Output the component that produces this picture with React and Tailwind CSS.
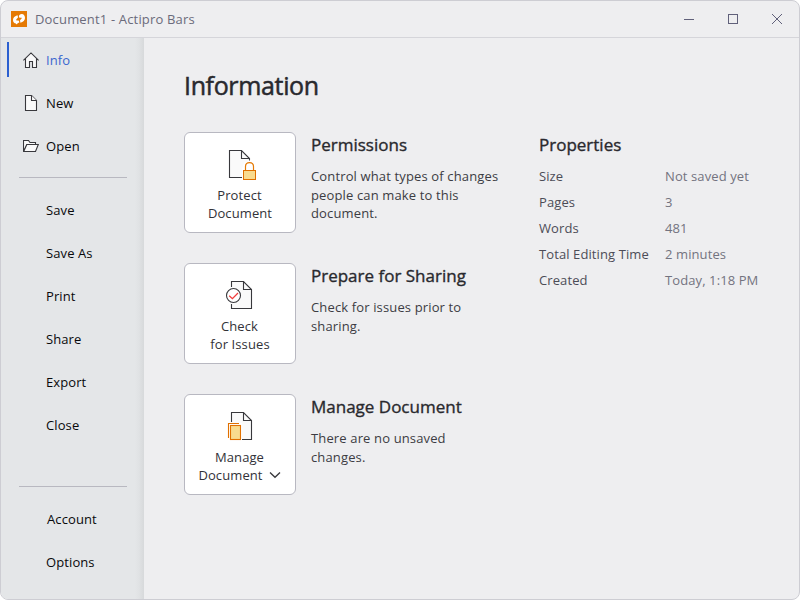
const stroke = "#38383c";

function Logo() {
  return (
    <svg width="16" height="16" viewBox="0 0 16 16" className="shrink-0">
      <rect width="16" height="16" fill="#e57a05" />
      <path d="M6.6 4.3 C3.8 4.8 2 6.8 2 9 C2 11.2 3.3 12.4 5 12.5 L5 13.6 L8.4 11.2 L7.6 9.4 L5.4 9.6 L5.2 8.5 L7 6.6 Z" fill="#fff" />
      <path d="M9.4 11.7 C12.2 11.2 14 9.2 14 7 C14 4.8 12.8 3 10.8 2.9 C9 2.9 7.9 4 7.9 5.4 C7.9 6.6 9 7.2 10.2 6.6 L10.8 7.3 L9 9.2 Z" fill="#fff" />
    </svg>
  );
}

function HomeIcon() {
  return (
    <svg width="16" height="16" viewBox="0 0 16 16" fill="none" stroke={stroke} strokeWidth="1.1">
      <path d="M2.5 7 V15.5 H6.5 V9.5 H9.5 V15.5 H13.5 V7 L8 1.5 Z" fill="#fafafa" stroke="none" />
      <path d="M0.4 8.3 L8 0.9 L15.6 8.3 M2.5 6.5 V15.5 H6.5 V9.5 H9.5 V15.5 H13.5 V6.5" />
    </svg>
  );
}

function NewIcon() {
  return (
    <svg width="16" height="16" viewBox="0 0 16 16" fill="#fafafa" stroke={stroke} strokeWidth="1.1">
      <path d="M2.5 0.5 H8.5 L13.5 5.5 V15.5 H2.5 Z" />
      <path d="M8.5 0.5 V5.5 H13.5" />
    </svg>
  );
}

function OpenIcon() {
  return (
    <svg width="16" height="16" viewBox="0 0 16 16" fill="#fafafa" stroke={stroke} strokeWidth="1.1">
      <path d="M0.5 13.5 V2.5 H5.5 L7 4.5 H12.5 V6.5 H4 Z" />
      <path d="M0.7 13.5 L3.8 6.5 H15.3 L12.5 13.5 Z" />
    </svg>
  );
}

function ProtectIcon() {
  return (
    <svg width="32" height="32" viewBox="0 0 32 32" fill="none" stroke={stroke}>
      <path d="M5.5 1.5 H17.5 L25.5 9.5 V29 H5.5 Z" fill="#fafafa" stroke="none" />
      <path d="M18 29 V20 L20 14 L27 11 V29 Z" fill="#fff" stroke="none" />
      <path d="M18 28.5 H5.5 V1.5 H17.5 L25.5 9.5 V11.5 M17.5 1.5 V9.5 H25.5" strokeWidth="1.1" />
      <path d="M21.5 21.5 V17.5 C21.5 12.2 29.5 12.2 29.5 17.5 V21.5" stroke="#e57a05" strokeWidth="1.2" />
      <rect x="19.5" y="21.5" width="12" height="9" fill="#f8db8f" stroke="#e07000" />
    </svg>
  );
}

function CheckIcon() {
  return (
    <svg width="32" height="32" viewBox="0 0 32 32" fill="none" stroke={stroke} strokeWidth="1.1">
      <path d="M7.5 1.5 H19.5 L27.5 9.5 V28.5 H7.5 Z" fill="#fafafa" />
      <path d="M19.5 1.5 V9.5 H27.5" />
      <path d="M7.5 7 V24" stroke="#fff" strokeWidth="2" />
      <circle cx="9.5" cy="15.5" r="7" fill="#fff" />
      <path d="M5.2 15.7 L8.4 18.7 L14 13" stroke="#f03c3c" strokeWidth="1.3" />
    </svg>
  );
}

function ManageIcon() {
  return (
    <svg width="32" height="32" viewBox="0 0 32 32" fill="none" stroke={stroke} strokeWidth="1.1">
      <path d="M7.5 1.5 H19.5 L27.5 9.5 V28.5 H7.5 Z" fill="#fafafa" stroke="none" />
      <path d="M7.5 11 V1.5 H19.5 L27.5 9.5 V28.5 H18 M19.5 1.5 V9.5 H27.5" />
      <rect x="4" y="12" width="14" height="18" fill="#fff" stroke="none" />
      <path d="M4.5 27 V12.5 H15" stroke="#e07000" />
      <rect x="6.5" y="14.5" width="10" height="14" fill="#f8db8f" stroke="#e07000" />
    </svg>
  );
}

function NavItem({ icon, label, selected, className = "" }) {
  return (
    <div className="flex h-[43px] shrink-0 items-center pl-[6px]">
      <div className={`-mt-[2px] h-[35px] w-[2px] ${selected ? "bg-[#2b5fd0]" : ""}`} />
      <div className="-mt-[2px] ml-[14px] flex w-4 justify-center">{icon}</div>
      <div className={`-mt-[2px] ml-[7px] text-[13px] leading-[18px] tracking-[0.1px] ${selected ? "text-[#3a66cf]" : "text-[#09090b]"} ${className}`}>{label}</div>
    </div>
  );
}

function Section({ icon, lines, menu, title, children }) {
  return (
    <div className="flex h-[101px]">
      <button className="flex w-28 shrink-0 flex-col items-center rounded-[6px] border border-[#b8b8c1] bg-white pt-4 text-[13px] leading-[18px] tracking-[0.1px] text-[#323238]">
        {icon}
        <span className="mt-[5px] pr-px">{lines[0]}</span>
        <span className="flex items-center">
          {lines[1]}
          {menu && (
            <svg width="12" height="8" viewBox="0 0 12 8" fill="none" stroke="#38383c" strokeWidth="1.3" className="mr-px ml-[6px]">
              <path d="M1 1.5 L6 6.3 L11 1.5" />
            </svg>
          )}
        </span>
      </button>
      <div className="ml-[15px]">
        <h2 className="mt-px text-[17px] leading-6 text-[#29292e] [-webkit-text-stroke:0.35px_#29292e]">{title}</h2>
        <p className="mt-[10px] text-[13px] leading-[18.6px] tracking-[0.14px] whitespace-nowrap text-[#3c3c43]">{children}</p>
      </div>
    </div>
  );
}

const properties = [
  ["Size", "Not saved yet"],
  ["Pages", "3"],
  ["Words", "481"],
  ["Total Editing Time", "2 minutes"],
  ["Created", "Today, 1:18 PM"],
];

export default function App() {
  return (
    <div className="h-[600px] w-[800px] bg-white font-['Open_Sans','Noto_Sans',sans-serif]">
      <div className="flex h-full w-full flex-col overflow-hidden rounded-[8px] border border-[#cdcdd3] bg-[#eeeef0]">
        <header className="flex h-[37px] shrink-0 items-center border-b border-[#d5d5da] pl-[10px]">
          <Logo />
          <span className="mt-px ml-2 text-[13px] tracking-[0.17px] text-[#6b6b7b]">Document1 - Actipro Bars</span>
          <div className="ml-auto flex pr-[17px] text-[#60607a]">
            <svg width="98" height="12" viewBox="0 0 98 12" fill="none" stroke="currentColor">
              <path d="M0 6.5 H10" />
              <rect x="44.5" y="1.5" width="9" height="9" />
              <path d="M88 1 L98 11 M98 1 L88 11" />
            </svg>
          </div>
        </header>
        <div className="flex min-h-0 flex-1">
          <nav className="flex w-[143px] shrink-0 flex-col bg-[linear-gradient(to_right,#e4e6e8_134px,#e0e2e4_138px,#d7d9db_143px)] pt-px">
            <NavItem icon={<HomeIcon />} label="Info" selected />
            <NavItem icon={<NewIcon />} label="New" />
            <NavItem icon={<OpenIcon />} label="Open" />
            <div className="mt-[9px] mb-[11px] ml-[18px] h-px w-[108px] shrink-0 bg-[#b8b8c0]" />
            <NavItem label="Save" />
            <NavItem label="Save As" />
            <NavItem label="Print" />
            <NavItem label="Share" />
            <NavItem label="Export" />
            <NavItem label="Close" />
            <div className="mt-auto mb-[11px] ml-[18px] h-px w-[108px] shrink-0 bg-[#b8b8c0]" />
            <NavItem label="Account" className="pl-px" />
            <NavItem label="Options" />
            <div className="h-[15px] shrink-0" />
          </nav>
          <main className="flex-1 pl-10">
            <h1 className="mt-[29px] text-[25px] leading-[36px] tracking-[-0.35px] text-[#29292e] [-webkit-text-stroke:0.5px_#29292e]">Information</h1>
            <div className="mt-[29px] flex">
              <div className="flex w-[355px] flex-col gap-[30px]">
                <Section icon={<ProtectIcon />} lines={["Protect", "Document"]} title="Permissions">
                  Control what types of changes<br />people can make to this<br />document.
                </Section>
                <Section icon={<CheckIcon />} lines={["Check", "for Issues"]} title="Prepare for Sharing">
                  Check for issues prior to<br />sharing.
                </Section>
                <Section icon={<ManageIcon />} lines={["Manage", "Document"]} menu title="Manage Document">
                  There are no unsaved<br />changes.
                </Section>
              </div>
              <div>
                <h2 className="mt-px text-[17px] leading-6 text-[#29292e] [-webkit-text-stroke:0.35px_#29292e]">Properties</h2>
                <dl className="mt-[6px] grid grid-cols-[126px_auto] text-[13px] leading-[26px] tracking-[0.1px] whitespace-nowrap">
                  {properties.map(([k, v]) => (
                    <div key={k} className="contents">
                      <dt className="text-[#4c4c57]">{k}</dt>
                      <dd className="text-[#73737f]">{v}</dd>
                    </div>
                  ))}
                </dl>
              </div>
            </div>
          </main>
        </div>
      </div>
    </div>
  );
}
